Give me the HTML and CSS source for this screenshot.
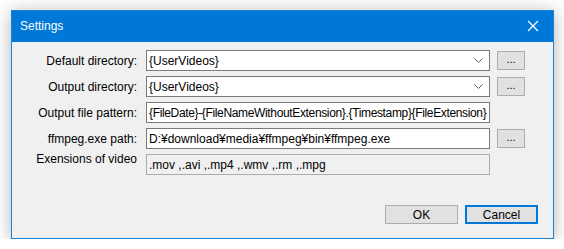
FILE: index.html
```html
<!DOCTYPE html>
<html lang="ja">
<head>
    <meta charset="UTF-8">
    <title>Settings</title>
    <link rel="stylesheet" href="styles.css">
</head>
<body>
    <div class="window">
        <div class="titlebar">
            <span class="title">Settings</span>
            <svg class="close" width="12" height="12" viewBox="0 0 12 12">
                <path d="M1 1 L11 11 M11 1 L1 11" stroke="#fff" stroke-width="1.2" fill="none"/>
            </svg>
        </div>
        <div class="content">
            <div class="row">
                <label class="label">Default directory:</label>
                <div class="field combo">
                    <span class="text">{UserVideos}</span>
                    <svg class="chevron" width="9" height="5" viewBox="0 0 9 5">
                        <path d="M0.5 0.5 L4.5 4.5 L8.5 0.5" stroke="#606060" stroke-width="1" fill="none"/>
                    </svg>
                </div>
                <button class="browse">...</button>
            </div>
            <div class="row">
                <label class="label">Output directory:</label>
                <div class="field combo">
                    <span class="text">{UserVideos}</span>
                    <svg class="chevron" width="9" height="5" viewBox="0 0 9 5">
                        <path d="M0.5 0.5 L4.5 4.5 L8.5 0.5" stroke="#606060" stroke-width="1" fill="none"/>
                    </svg>
                </div>
                <button class="browse">...</button>
            </div>
            <div class="row">
                <label class="label">Output file pattern:</label>
                <div class="field"><span class="text pattern">{FileDate}-{FileNameWithoutExtension}.{Timestamp}{FileExtension}</span></div>
            </div>
            <div class="row">
                <label class="label">ffmpeg.exe path:</label>
                <div class="field"><span class="text">D:¥download¥media¥ffmpeg¥bin¥ffmpeg.exe</span></div>
                <button class="browse">...</button>
            </div>
            <div class="row">
                <label class="label top">Exensions of video</label>
                <div class="field readonly"><span class="text">.mov ,.avi ,.mp4 ,.wmv ,.rm ,.mpg</span></div>
            </div>
            <div class="actions">
                <button class="btn">OK</button>
                <button class="btn default">Cancel</button>
            </div>
        </div>
    </div>
</body>
</html>
```

FILE: styles.css
```css
body {
    margin: 0;
    background: #ffffff;
    font-family: "Liberation Sans", Arial, sans-serif;
    font-size: 12px;
    color: #000;
}
.window {
    width: 541px;
    margin: 10px 0 0 11px;
    border: 1px solid #1883d7;
    box-shadow: 0 2px 16px rgba(0, 0, 0, 0.3);
}
.titlebar {
    height: 31px;
    background: #0078d7;
    color: #fff;
    display: flex;
    align-items: center;
    padding: 0 10px 0 8px;
}
.title {
    flex: 1;
    font-size: 12px;
    padding-bottom: 2px;
}
.close {
    margin-right: 4px;
    margin-bottom: 2px;
}
.content {
    background: #f0f0f0;
    height: 196px;
    padding-top: 8px;
    box-sizing: border-box;
}
.row {
    display: flex;
    align-items: center;
    height: 21px;
    margin-bottom: 5px;
}
.label {
    width: 125px;
    text-align: right;
    margin-right: 9px;
    white-space: nowrap;
}
.label.top {
    align-self: flex-start;
    margin-top: -2px;
}
.field {
    width: 344px;
    height: 21px;
    box-sizing: border-box;
    border: 1px solid #7a7a7a;
    background: #fff;
    display: flex;
    align-items: center;
    padding-left: 2px;
    overflow: hidden;
}
.field.readonly {
    background: #f0f0f0;
    border-color: #adadad;
}
.text {
    flex: 1;
    white-space: nowrap;
}
.pattern {
    letter-spacing: -0.35px;
}
.chevron {
    margin-right: 6px;
}
.browse {
    width: 28px;
    height: 19px;
    margin-left: 7px;
    padding: 0 0 3px;
    border: 1px solid #adadad;
    background: #e1e1e1;
    font-family: inherit;
    font-size: 11px;
}
.actions {
    display: flex;
    justify-content: flex-end;
    gap: 7px;
    padding-right: 15px;
    margin-top: 30px;
}
.btn {
    width: 73px;
    height: 19px;
    border: 1px solid #adadad;
    background: #e1e1e1;
    font-family: inherit;
    font-size: 12px;
    padding: 0;
}
.btn.default {
    border: 2px solid #0078d7;
}
```
